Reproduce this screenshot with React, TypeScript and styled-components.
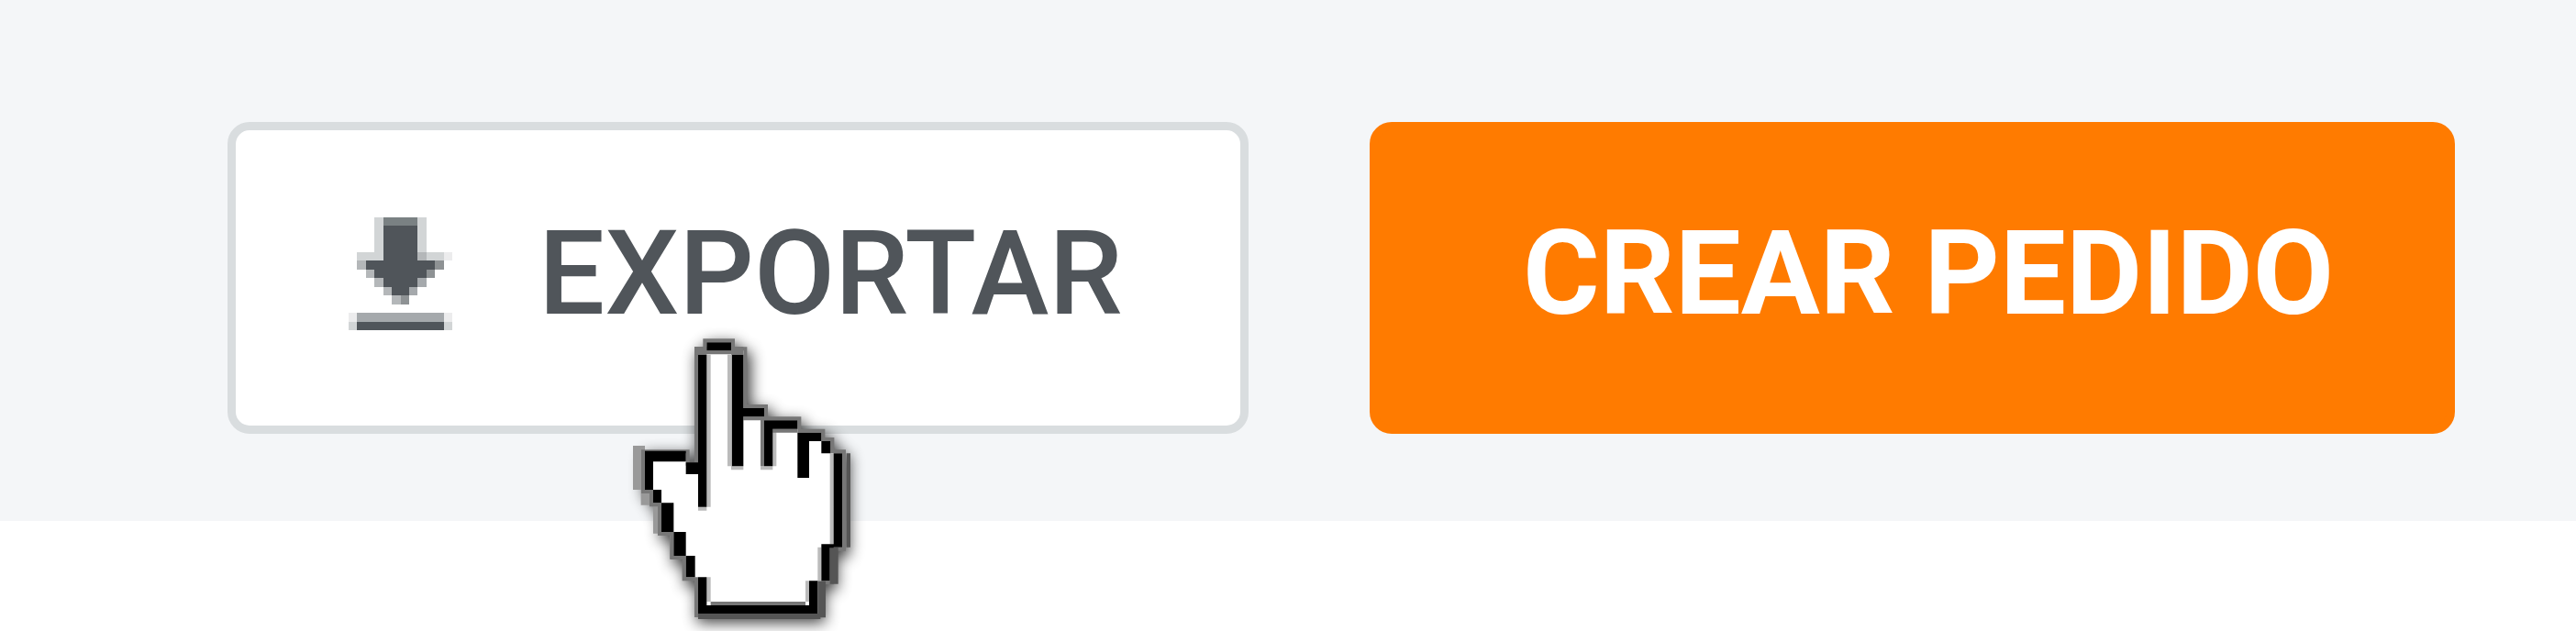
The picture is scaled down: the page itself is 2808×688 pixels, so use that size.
import React from "react";
import styled, { createGlobalStyle } from "styled-components";

const GlobalStyle = createGlobalStyle`
  *, *::before, *::after { box-sizing: border-box; }
  body { margin: 0; min-height: 100vh; background: #ffffff; overflow: hidden; }
`;

const Toolbar = styled.header`
  display: flex;
  justify-content: flex-end;
  gap: 132px;
  padding: 133px 132px 95px;
  background: #f4f6f8;
`;

const ButtonHolder = styled.div`
  position: relative;
  display: flex;
`;

const Button = styled.button<{ $primary?: boolean }>`
  display: flex;
  align-items: center;
  gap: 94px;
  padding: ${(p) => (p.$primary ? "94px 123px 104px 158px" : "94px 128px 104px 123px")};
  border: 9px solid ${(p) => (p.$primary ? "#ff7b00" : "#d9dddf")};
  border-radius: 24px;
  background: ${(p) => (p.$primary ? "#ff7b00" : "#ffffff")};
  color: ${(p) => (p.$primary ? "#ffffff" : "#50555a")};
  font-family: Roboto, "Liberation Sans", sans-serif;
  font-size: 128px;
  font-weight: ${(p) => (p.$primary ? 700 : 500)};
  line-height: 124px;
  white-space: nowrap;
  cursor: pointer;
`;

const DownloadGlyph = styled.svg`
  display: block;
  flex: none;
  width: 113px;
  height: 123px;
`;

const HandPointer = styled.svg`
  position: absolute;
  left: 414px;
  top: 217px;
  width: 300px;
  height: 338px;
  overflow: visible;
  pointer-events: none;
`;

const HAND =
  "M325 70H405V97H445V285H513V325H622V365H700V393H730V433H768V740H728V850H688V957H297V838H257V768H217V690H177V595H150V552H123V433H257V473H297V97H325Z";

function DownloadIcon() {
  return (
    <DownloadGlyph viewBox="0 0 12 13" preserveAspectRatio="none" shapeRendering="crispEdges" aria-hidden="true">
      <path fill="#ececed" d="M0 11h1v1H0zM11 11h1v1h-1zM11 4h1v1h-1z" />
      <path fill="#d2d5d6" d="M3 0h1v4H3zM8 0h1v4H8zM1 4h3v1H1zM9 4h2v1H9zM0 12h1v1H0zM11 12h1v1h-1z" />
      <path fill="#b4b7b9" d="M1 5h1v1H1zM2 6h1v1H2zM3 7h1v1H3zM4 8h1v1H4zM5 9h1v1H5zM8 4h1v1H8z" />
      <path fill="#a5a9ac" d="M1 11h10v1H1zM7 8h1v1H7zM8 7h1v1H8z" />
      <path fill="#8e9294" d="M10 5h1v1h-1zM9 6h1v1H9zM6 9h1v1H6z" />
      <path fill="#7a8183" d="M4 0h4v1H4z" />
      <path fill="#50555a" d="M4 1h4v4h2v1H9v1H8v1H7v1H5V8H4V7H3V6H2V5h2zM1 12h10v1H1z" />
    </DownloadGlyph>
  );
}

function HandCursor() {
  return (
    <HandPointer viewBox="0 0 900 1014" aria-hidden="true">
      <defs>
        <filter id="hand-shadow" x="-20%" y="-20%" width="140%" height="140%">
          <feGaussianBlur stdDeviation="24" />
        </filter>
      </defs>
      <path d={HAND} transform="translate(10 16)" fill="#000000" stroke="#000000" strokeWidth="28" opacity="0.75" filter="url(#hand-shadow)" />
      <path fill="#999999" d="M84 408h39v144H84zM110 552h40v50h-40zM150 595h27v100h-27zM204 690h13v88h-13z" />
      <path d={HAND} fill="#777777" stroke="#777777" strokeWidth="24" />
      <path fill="#555555" d="M782 433h13v307h-13zM728 740h27v120h-27zM688 850h26v120h-26zM297 957h400v18H297z" />
      <path d={HAND} fill="#ffffff" />
      <path
        fill="#bbbbbb"
        d="M325 110h13v498h-13zM393 110h12v365h-12zM297 608h28v12h-28zM405 475h40v12h-40zM501 475h40v12h-40zM541 353h12v122h-12zM325 838h13v80h-13zM648 850h12v68h-12zM688 740h12v110h-12zM728 433h12v297h-12z"
      />
      <path
        fill="#777777"
        d="M285 84h40v26h-40zM405 84h40v26h-40zM325 97h80v12h-80zM445 313h68v12h-68zM501 325h12v150h-12zM541 353h81v12h-81zM338 918h310v12H338z"
      />
      <path
        fill="#000000"
        d="M325 70h80v27h-80zM297 110h28v498h-28zM407 110h38v365h-38zM440 285h73v28h-73zM513 325h28v150h-28zM513 325h109v28H513zM622 365h38v148h-38zM622 365h78v28h-78zM700 393h30v40h-30zM740 433h28v307h-28zM700 730h40v12h-40zM700 740h28v110h-28zM660 850h28v107h-28zM297 930h391v27H297zM297 838h28v100h-28zM257 768h30v70h-30zM217 690h40v78h-40zM177 595h40v95h-40zM150 552h27v43h-27zM123 425h27v127h-27zM123 425h134v35H123zM257 463h40v38h-40z"
      />
    </HandPointer>
  );
}

export default function App() {
  return (
    <>
      <GlobalStyle />
      <Toolbar>
        <ButtonHolder>
          <Button type="button">
            <DownloadIcon />
            EXPORTAR
          </Button>
          <HandCursor />
        </ButtonHolder>
        <Button type="button" $primary>
          CREAR PEDIDO
        </Button>
      </Toolbar>
    </>
  );
}
